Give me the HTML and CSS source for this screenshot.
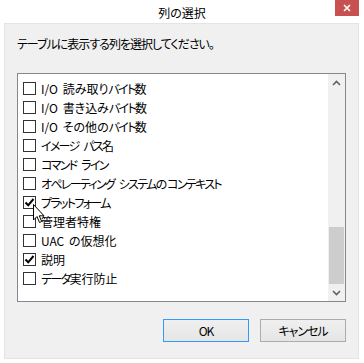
FILE: index.html
```html
<!DOCTYPE html>
<html lang="ja">

<head>
    <meta charset="UTF-8">
    <title>列の選択</title>
    <link rel="stylesheet" href="styles.css">
</head>

<body>

    <div class="window">
        <div class="titlebar">
            <span></span>
            <div class="title">列の選択</div>
            <div class="close">
                <svg width="10" height="8" viewBox="0 0 10 8">
                    <path d="M2 1 L8 7 M8 1 L2 7" stroke="#fff" stroke-width="1.6" />
                </svg>
            </div>
        </div>

        <div class="panel">
            <p class="prompt">テーブルに表示する列を選択してください。</p>

            <div class="listbox">
                <ul class="items">
                    <li class="item"><span class="check"></span><span class="label">I/O 読み取り<span class="kt">バイト</span>数</span></li>
                    <li class="item"><span class="check"></span><span class="label">I/O 書き込み<span class="kt">バイト</span>数</span></li>
                    <li class="item"><span class="check"></span><span class="label">I/O その他の<span class="kt">バイト</span>数</span></li>
                    <li class="item"><span class="check"></span><span class="label"><span class="kt">イメージ</span> <span class="kt">パス</span>名</span></li>
                    <li class="item"><span class="check"></span><span class="label"><span class="kt">コマンド</span> <span class="kt">ライン</span></span></li>
                    <li class="item"><span class="check"></span><span class="label"><span class="kt">オペレーティング</span> <span class="kt">システム</span>の<span class="kt">コンテキスト</span></span></li>
                    <li class="item"><span class="check checked"><svg width="11" height="11" viewBox="0 0 11 11"><path d="M1.5 5.5 L4.2 8.3 L9.5 2" fill="none" stroke="#000" stroke-width="2" /></svg></span><span class="label"><span class="kt">プラットフォーム</span></span></li>
                    <li class="item"><span class="check"></span><span class="label">管理者特権</span></li>
                    <li class="item"><span class="check"></span><span class="label">UAC の仮想化</span></li>
                    <li class="item"><span class="check checked"><svg width="11" height="11" viewBox="0 0 11 11"><path d="M1.5 5.5 L4.2 8.3 L9.5 2" fill="none" stroke="#000" stroke-width="2" /></svg></span><span class="label">説明</span></li>
                    <li class="item"><span class="check"></span><span class="label"><span class="kt">データ</span>実行防止</span></li>
                </ul>
                <div class="scrollbar">
                    <div class="arrow">
                        <svg width="9" height="6" viewBox="0 0 9 6"><path d="M1 5 L4.5 1.5 L8 5" fill="none" stroke="#606060" stroke-width="1.6" /></svg>
                    </div>
                    <div class="track">
                        <div class="thumb"></div>
                    </div>
                    <div class="arrow">
                        <svg width="9" height="6" viewBox="0 0 9 6"><path d="M1 1 L4.5 4.5 L8 1" fill="none" stroke="#606060" stroke-width="1.6" /></svg>
                    </div>
                </div>

                <!-- mouse pointer over the checkbox -->
                <svg class="cursor" width="13" height="20" viewBox="0 0 13 20">
                    <path d="M0.5 0.5 L0.5 16 L4 12.5 L6.5 18.5 L8.7 17.5 L6.3 11.8 L11 11.8 Z" fill="#fff" stroke="#000" stroke-width="1" />
                </svg>
            </div>

            <div class="buttons">
                <button class="btn default">OK</button>
                <button class="btn">キャンセル</button>
            </div>
        </div>
    </div>

</body>

</html>
```

FILE: styles.css
```css
* {
    box-sizing: border-box;
}

body {
    margin: 0;
    background-color: #fff;
    font-family: "Noto Sans CJK JP", "Noto Sans", sans-serif;
    font-size: 12px;
    font-feature-settings: "palt";
    color: #000;
}

.window {
    width: 364px;
    height: 363px;
    background-color: #fff;
    display: flex;
    flex-direction: column;
}

.titlebar {
    height: 23px;
    display: grid;
    grid-template-columns: 1fr auto 1fr;
    align-items: start;
}

.title {
    line-height: 25px;
}

.close {
    justify-self: end;
    margin-right: 5px;
    width: 24px;
    height: 16px;
    background-color: #c75050;
    display: flex;
    justify-content: center;
    align-items: center;
}

.panel {
    margin: 0 5px 4px 4px;
    height: 336px;
    background-color: #f0f0f0;
    border: 1px solid #e4e4e4;
    padding: 0 12px 0 12px;
    display: flex;
    flex-direction: column;
}

.prompt {
    margin: 12px 0 0 0;
    height: 37px;
    line-height: 16px;
    letter-spacing: -1px;
}

.listbox {
    position: relative;
    height: 229px;
    background-color: #fff;
    border: 1px solid #828790;
    display: flex;
}

.items {
    flex: 1;
    list-style: none;
    margin: 0;
    padding: 5px 0 0 5px;
}

.item {
    height: 19px;
    display: flex;
    align-items: center;
}

.label {
    white-space: nowrap;
    word-spacing: 2px;
}

/* katakana runs are narrower in the original UI font */
.kt {
    letter-spacing: -1.7px;
}

.check {
    width: 13px;
    height: 13px;
    border: 1px solid #333;
    background-color: #fff;
    margin-right: 5px;
    display: flex;
    justify-content: center;
    align-items: center;
}

.scrollbar {
    width: 17px;
    background-color: #f0f0f0;
    display: flex;
    flex-direction: column;
}

.arrow {
    height: 17px;
    display: flex;
    justify-content: center;
    align-items: center;
}

.track {
    flex: 1;
    padding: 0 1px;
}

.thumb {
    margin-top: 136px;
    height: 57px;
    background-color: #cdcdcd;
}

.cursor {
    position: absolute;
    left: 15px;
    top: 130px;
}

.buttons {
    display: flex;
    justify-content: flex-end;
    gap: 11px;
    margin-top: 17px;
}

.btn {
    width: 86px;
    height: 23px;
    font-family: "Noto Sans CJK JP", "Noto Sans", sans-serif;
    font-size: 12px;
    font-feature-settings: "palt";
    letter-spacing: -1px;
    background: linear-gradient(#f0f0f0, #e5e5e5);
    border: 1px solid #acacac;
    padding: 0;
    color: #000;
}

.btn.default {
    border-color: #3399ff;
}
```
